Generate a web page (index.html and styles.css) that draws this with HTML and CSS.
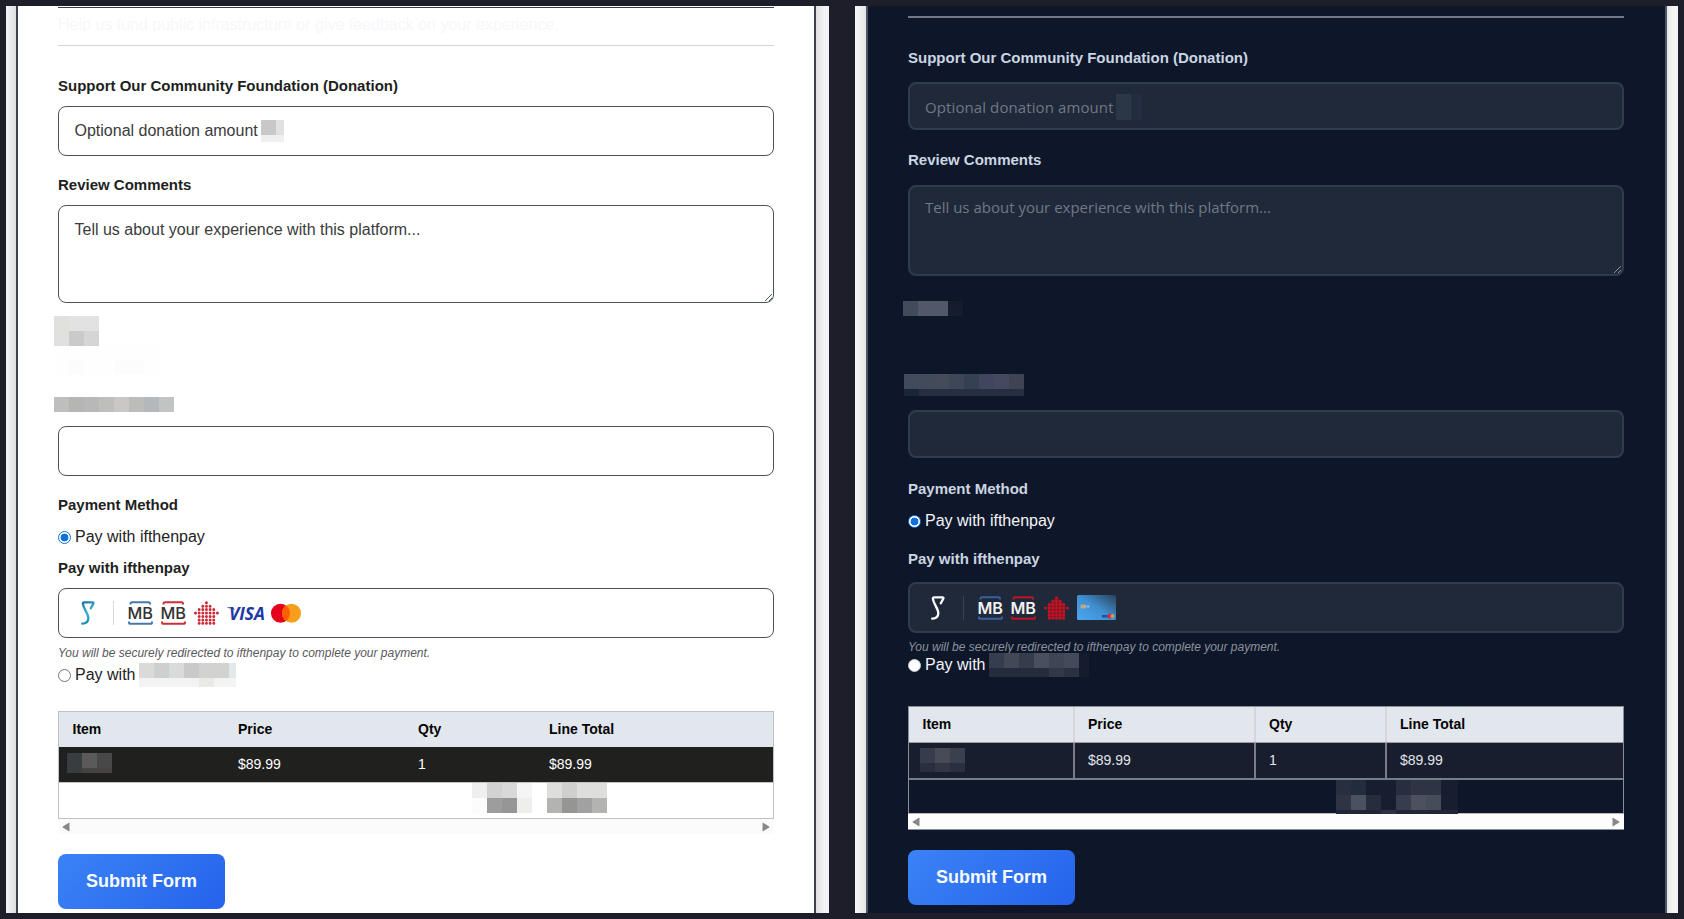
FILE: index.html
```html
<!DOCTYPE html>
<html lang="en">
<head>
<meta charset="utf-8">
<title>Donation form</title>
<link rel="stylesheet" href="styles.css">
</head>
<body>
<svg width="0" height="0" class="defs">
  <defs>
    <linearGradient id="pen" x1="0" y1="0" x2="14" y2="24" gradientUnits="userSpaceOnUse"><stop offset="0" stop-color="#176a96"/><stop offset=".5" stop-color="#35b4d6"/><stop offset="1" stop-color="#176a96"/></linearGradient>
    <linearGradient id="card" x1="0" y1="1" x2="1" y2="0"><stop offset="0" stop-color="#4aa8f2"/><stop offset=".5" stop-color="#3f8fd2"/><stop offset="1" stop-color="#2b4258"/></linearGradient>
    <symbol id="brand" viewBox="0 0 14 24"><path d="M1.200 22.600C4.800 22.400 7.300 20.300 7.300 17.200C7.300 12.500 2.600 8 1.900 2.800Q1.800 1.300 3.200 1.300H11.300Q12.800 1.300 12.300 2.700L9.800 7.200" fill="none" stroke-width="2.300" stroke-linecap="round" stroke-linejoin="round"/></symbol>
    <symbol id="brackets" viewBox="0 0 25 24"><path d="M2.500 3.400V2.800Q2.500 1.200 4 1.200H20.500Q22 1.200 22 2.800V3.400M1 20.600V21.200Q1 22.800 2.500 22.800H22.500Q24 22.800 24 21.200V20.600" fill="none" stroke-width="2"/></symbol>
    <symbol id="house" viewBox="0 0 25 24"><path d="M12.450 1.700h.01M8.800 5.150H16.200M5.150 8.600H19.900M1.500 12.050H23.500M5.150 15.500H19.900M5.150 18.950H19.900M5.150 22.300H19.900" fill="none" stroke-width="3" stroke-linecap="round" stroke-dasharray="0 3.650"/></symbol>
  </defs>
</svg>
<main class="compare">
  <section class="shot light">
    <form class="form">
      <p class="intro">Help us fund public infrastructure or give feedback on your experience.</p>
      <div class="label first">Support Our Community Foundation (Donation)</div>
      <div class="field"><span class="hint">Optional donation amount</span>
        <svg class="mosaic in-field" width="23" height="22"><path fill="#c8c8c8" d="M0 0h15v15H0z"/><path fill="#e1e1e1" d="M15 0h8v15h-8z"/><path fill="#efefef" d="M0 15h23v7H0z"/></svg>
      </div>
      <div class="label">Review Comments</div>
      <div class="field area"><span class="hint">Tell us about your experience with this platform...</span>
        <svg class="grip" width="9" height="9"><path d="M1 8L8 1M5 8L8 5" fill="none"/></svg>
      </div>
      <svg class="mosaic total-title" width="105" height="60"><path fill="#e0e0de" d="M0 0h15v30H0z"/><path fill="#e2e2e2" d="M15 0h30v15H15z"/><path fill="#cacaca" d="M15 15h15v15H15z"/><path fill="#d5d5d5" d="M30 15h15v15H30z"/><path fill="#fefefe" d="M0 30h105v30H0z"/><path fill="#fcfcfc" d="M15 45h15v13H15zM60 45h30v13H60z"/></svg>
      <svg class="mosaic name-title" width="120" height="15"><path fill="#bebfbd" d="M0 0h15v15H0z"/><path fill="#b5b6b3" d="M15 0h15v15H15z"/><path fill="#b7b9b8" d="M30 0h15v15H30z"/><path fill="#bebfbd" d="M45 0h15v15H45z"/><path fill="#c9c8c6" d="M60 0h15v15H60z"/><path fill="#bcbdbb" d="M75 0h15v15H75z"/><path fill="#b5b8bb" d="M90 0h15v15H90z"/><path fill="#c2c4c3" d="M105 0h15v15h-15z"/></svg>
      <div class="field name"></div>
      <div class="label">Payment Method</div>
      <label class="option"><span class="radio on"></span><span class="opt-text">Pay with ifthenpay</span></label>
      <div class="label gateway">Pay with ifthenpay</div>
      <div class="field logos">
        <svg class="brand" width="14" height="24"><use href="#brand" stroke="url(#pen)"/></svg>
        <span class="rule"></span>
        <svg class="mb" width="25" height="24"><use href="#brackets" stroke="#4779a8"/><text x="-.5" y="17.700" textLength="25.500" lengthAdjust="spacingAndGlyphs">MB</text></svg>
        <svg class="mb" width="25" height="24"><use href="#brackets" stroke="#cb2f3a"/><text x="-.5" y="17.700" textLength="25.500" lengthAdjust="spacingAndGlyphs">MB</text></svg>
        <svg class="house" width="25" height="24"><use href="#house"/></svg>
        <svg class="visa" width="38" height="24"><text x="2" y="18.700" textLength="36" lengthAdjust="spacingAndGlyphs">VISA</text><path d="M.5 6.200H6L8 9Q4 6.800 .5 6.900Z" fill="#2340a0"/></svg>
        <svg class="mc" width="30" height="24"><circle cx="9.500" cy="12.200" r="9.500" fill="#e5001b"/><circle cx="20.500" cy="12.200" r="9.500" fill="#f79e1b"/><path d="M15 4.450a9.500 9.500 0 0 1 0 15.500a9.500 9.500 0 0 1 0-15.500z" fill="#ff5f00"/></svg>
      </div>
      <div class="note">You will be securely redirected to ifthenpay to complete your payment.</div>
      <label class="option second"><span class="radio"></span><span class="opt-text">Pay with</span>
        <svg class="mosaic in-option" width="97" height="24"><path fill="#dadbd8" d="M0 0h15v15H0z"/><path fill="#cecfcf" d="M15 0h15v15H15z"/><path fill="#d9dbdb" d="M30 0h15v15H30z"/><path fill="#c9c9ca" d="M45 0h15v15H45z"/><path fill="#d2d3d1" d="M60 0h30v15H60z"/><path fill="#e4e8eb" d="M90 0h7v15h-7z"/><path fill="#f2f3f2" d="M0 15h97v9H0z"/><path fill="#e9e9e7" d="M60 15h15v9H60z"/></svg>
      </label>
      <div class="table">
        <div class="tr head"><b>Item</b><b>Price</b><b>Qty</b><b>Line Total</b></div>
        <div class="tr row"><span><svg class="mosaic in-cell" width="45" height="20"><path fill="#3a3d3f" d="M0 0h15v20H0z"/><path fill="#5a5a5a" d="M15 0h15v15H15z"/><path fill="#484848" d="M30 0h15v15H30z"/><path fill="#444342" d="M15 15h30v5H15z"/></svg></span><span>$89.99</span><span>1</span><span>$89.99</span></div>
        <div class="tr foot"><svg class="mosaic sum" width="135" height="30"><path fill="#efefef" d="M0 0h15v15H0z"/><path fill="#d2d2d2" d="M15 0h15v15H15z"/><path fill="#d9d9d9" d="M30 0h15v15H30z"/><path fill="#f5f5f5" d="M45 0h15v15H45z"/><path fill="#fcfcfc" d="M0 15h15v15H0z"/><path fill="#9d9d9d" d="M15 15h15v15H15z"/><path fill="#969696" d="M30 15h15v15H30z"/><path fill="#eeeeed" d="M45 15h15v15H45z"/><path fill="#dededd" d="M75 0h15v15H75zM105 0h30v15h-30z"/><path fill="#cfcfce" d="M90 0h15v15H90z"/><path fill="#b3b3b1" d="M75 15h15v15H75zM120 15h15v15h-15z"/><path fill="#959594" d="M90 15h15v15H90z"/><path fill="#a1a1a1" d="M105 15h15v15h-15z"/></svg></div>
      </div>
      <div class="scroll"><svg width="8" height="10"><path d="M7.500 1.200V8.800Q7.500 9.500 6.500 9L.8 5.600Q.2 5 .8 4.400L6.500 1Q7.500.5 7.500 1.200Z"/></svg><svg width="8" height="10"><path d="M.5 1.200V8.800Q.5 9.500 1.500 9L7.200 5.600Q7.800 5 7.200 4.400L1.500 1Q.5.5.5 1.200Z"/></svg></div>
      <button type="button" class="submit"><span>Submit Form</span></button>
    </form>
  </section>
  <section class="shot dark">
    <form class="form">
      <div class="divider"></div>
      <div class="label first">Support Our Community Foundation (Donation)</div>
      <div class="field"><span class="hint h1">Optional donation amount</span>
        <svg class="mosaic in-field" width="26" height="26"><path fill="#2b3647" d="M0 0h15v26H0z"/><path fill="#242d3f" d="M15 0h11v26H15z"/></svg>
      </div>
      <div class="label">Review Comments</div>
      <div class="field area"><span class="hint h2">Tell us about your experience with this platform...</span>
        <svg class="grip" width="9" height="9"><path d="M1 8L8 1M5 8L8 5" fill="none"/></svg>
      </div>
      <svg class="mosaic total-title" width="60" height="15"><path fill="#414b5c" d="M0 0h15v15H0z"/><path fill="#505869" d="M15 0h30v15H15z"/><path fill="#141c2e" d="M45 0h15v15H45z"/></svg>
      <svg class="mosaic name-title" width="120" height="22"><path fill="#424b5b" d="M0 0h30v15H0z"/><path fill="#444b5b" d="M30 0h15v15H30z"/><path fill="#3d4757" d="M45 0h15v15H45z"/><path fill="#344155" d="M60 0h15v15H60z"/><path fill="#40465d" d="M75 0h15v15H75z"/><path fill="#454960" d="M90 0h15v15H90z"/><path fill="#3f4354" d="M105 0h15v15h-15z"/><path fill="#1a2638" d="M0 15h15v7H0z"/><path fill="#252e42" d="M15 15h105v7H15z"/></svg>
      <div class="field name"></div>
      <div class="label">Payment Method</div>
      <label class="option"><span class="radio on"></span><span class="opt-text">Pay with ifthenpay</span></label>
      <div class="label gateway">Pay with ifthenpay</div>
      <div class="field logos">
        <svg class="brand" width="14" height="24"><use href="#brand" stroke="#fff"/></svg>
        <span class="rule"></span>
        <svg class="mb" width="25" height="24"><use href="#brackets" stroke="#36619f"/><text x="-.5" y="17.700" textLength="25.500" lengthAdjust="spacingAndGlyphs">MB</text></svg>
        <svg class="mb" width="25" height="24"><use href="#brackets" stroke="#c01525"/><text x="-.5" y="17.700" textLength="25.500" lengthAdjust="spacingAndGlyphs">MB</text></svg>
        <svg class="house" width="25" height="24"><path d="M12.500 1L21 9V23H4V9Z" fill="#861525"/><use href="#house"/></svg>
        <svg class="cc" width="39" height="25"><rect width="39" height="25" rx="1.500" fill="url(#card)"/><rect x="3.500" y="9.500" width="5.500" height="4" rx="1" fill="#b8aa88"/><path d="M9.500 10.500h3v2h-3z" fill="#8fc0e8"/><path d="M25 20h7v2.500h-7z" fill="#28509c"/><circle cx="33" cy="21" r="2.500" fill="#cc3048"/><circle cx="35.500" cy="21" r="2" fill="#d99a50"/></svg>
      </div>
      <div class="note">You will be securely redirected to ifthenpay to complete your payment.</div>
      <label class="option second"><span class="radio"></span><span class="opt-text">Pay with</span>
        <svg class="mosaic in-option" width="100" height="24"><path fill="#353e4f" d="M0 0h15v15H0z"/><path fill="#434856" d="M15 0h15v15H15z"/><path fill="#353c4b" d="M30 0h15v15H30z"/><path fill="#4a4f5d" d="M45 0h15v15H45z"/><path fill="#3f4554" d="M60 0h15v15H60z"/><path fill="#434a59" d="M75 0h15v15H75z"/><path fill="#141c2e" d="M90 0h10v24H90z"/><path fill="#242c3d" d="M0 15h60v9H0z"/><path fill="#323848" d="M60 15h15v9H60z"/><path fill="#293143" d="M75 15h15v9H75z"/></svg>
      </label>
      <div class="table">
        <div class="tr head"><b>Item</b><b>Price</b><b>Qty</b><b>Line Total</b></div>
        <div class="tr row"><span><svg class="mosaic in-cell" width="45" height="24"><path fill="#363c4b" d="M0 0h15v15H0z"/><path fill="#474b58" d="M15 0h15v15H15z"/><path fill="#3b404e" d="M30 0h15v15H30z"/><path fill="#292f3f" d="M0 15h15v9H0z"/><path fill="#323746" d="M15 15h15v9H15z"/><path fill="#2b3040" d="M30 15h15v9H30z"/></svg></span><span>$89.99</span><span>1</span><span>$89.99</span></div>
        <div class="tr foot"><svg class="mosaic sum" width="122" height="34"><path fill="#171e30" d="M0 0h122v35H0z"/><path fill="#262e3f" d="M0 0h15v15H0zM60 0h15v15H60z"/><path fill="#232c3c" d="M15 0h15v15H15z"/><path fill="#2d3545" d="M0 15h15v15H0zM75 0h30v15H75z"/><path fill="#4a5261" d="M15 15h15v15H15z"/><path fill="#262e3e" d="M30 15h15v15H30z"/><path fill="#353d4e" d="M60 15h15v15H60z"/><path fill="#4d515e" d="M75 15h15v15H75z"/><path fill="#454c5a" d="M90 15h15v15H90z"/><path fill="#1f2638" d="M0 30h45v5H0zM60 30h62v5H60z"/><path fill="#2b3245" d="M45 30h15v5H45z"/></svg></div>
      </div>
      <div class="scroll"><svg width="8" height="10"><path d="M7.500 1.200V8.800Q7.500 9.500 6.500 9L.8 5.600Q.2 5 .8 4.400L6.500 1Q7.500.5 7.500 1.200Z"/></svg><svg width="8" height="10"><path d="M.5 1.200V8.800Q.5 9.500 1.500 9L7.200 5.600Q7.800 5 7.200 4.400L1.500 1Q.5.5.5 1.200Z"/></svg></div>
      <button type="button" class="submit"><span>Submit Form</span></button>
    </form>
  </section>
</main>
</body>
</html>
```
FILE: styles.css
```css
* { box-sizing: border-box; }
body { margin: 0; background: #1d1e2a; font-family: "Liberation Sans", Arial, sans-serif; overflow: hidden; }
svg { display: block; flex: none; }
.defs { position: absolute; }
.compare { display: flex; gap: 26px; height: 919px; padding: 6px; }
.shot { width: 823px; height: 907px; overflow: hidden; display: flex; }
.light { background: linear-gradient(90deg, #f5f5f7 0, #dcdddf 10px, #dcdddf 809px, #f3f3f5 818px); padding: 0 13px 0 10px; }
.dark { background: linear-gradient(90deg, #f8f8f9 0, #e4e4e5 11px, #e8e8e9 812px, #f4f4f5 818px); padding: 0 11px; }
.form { flex: 1; height: 907px; padding: 0 40px; border: solid #3b414d; border-width: 0 2px; }
.light .form { background: #fff; padding-top: 1px; }
.dark .form { background: #0e172a; padding: 10px 41px 0 40px; border-color: #4a5566; }

.intro { margin: 0; height: 39px; border-top: 1px solid #353b49; border-bottom: 1px solid #d3d4d7; font-size: 16px; line-height: 34px; color: #f6f8fb; white-space: nowrap; }
.divider { height: 2px; background: #747988; }
.label { height: 20px; margin-top: 19px; font-size: 15px; font-weight: bold; line-height: 20px; color: #1e1f1e; white-space: nowrap; }
.label.first { margin-top: 30px; }
.light .gateway { margin-top: 11px; }
.field { position: relative; height: 50px; margin-top: 10px; padding: 0 15.500px; border: 1px solid #4b525e; border-radius: 8px; display: flex; align-items: center; }
.hint { font-size: 16px; line-height: 20px; color: #3a3b3c; white-space: nowrap; }
.area { height: 98px; align-items: flex-start; padding-top: 14px; }
.in-field { margin-left: 3px; }
.grip { position: absolute; right: 0; bottom: 0; stroke: #55585e; }
.total-title { margin: 13px 0 0 -4px; }
.name-title { margin: 21px 0 0 -4px; }
.name { margin-top: 14px; }
.option { display: flex; align-items: center; height: 20px; margin-top: 12px; font-size: 16px; color: #222; }
.radio { width: 13px; height: 13px; border: 1px solid #767676; border-radius: 50%; background: #fff; flex: none; }
.radio.on { border-color: #1273d3; background: radial-gradient(circle, #1070dc 0 3.700px, #fff 4.200px); }
.opt-text { margin-left: 4px; white-space: nowrap; }
.second { margin-top: 3px; }
.in-option { margin-left: 4px; }
.logos { padding: 0 0 0 22px; }
.rule { width: 1px; height: 24px; background: #d8dadd; margin: 0 14px 0 18px; }
.mb { margin-right: 8px; overflow: visible; }
.mb text { font: 500 16px Inter, sans-serif; fill: #333; }
.house { fill: #cb2a37; stroke: #cb2a37; margin-right: 8px; }
.visa { margin-right: 6px; overflow: visible; }
.visa text { font: italic 700 17px "Open Sans", sans-serif; fill: #2139a5; }
.note { height: 18px; margin-top: 6px; font-size: 12px; font-style: italic; line-height: 18px; color: #58595b; white-space: nowrap; }

.table { margin-top: 26px; height: 108px; border: 1px solid #bfc1c4; }
.tr { display: grid; grid-template-columns: 165.500px 180px 131px 1fr; align-items: center; font-size: 14px; }
.tr > b, .tr > span { padding-left: 13.500px; line-height: 20px; }
.head { height: 35px; background: #e2e7ed; color: #050505; }
.row { height: 35px; background: #20201f; color: #fff; }
.light .tr > b, .light .tr > span { margin-top: -1px; }
.foot { height: 36px; border-top: 1px solid #c4c4c4; }
.in-cell { margin: -2px 0 0 -5.500px; }
.light .sum { margin: -5px 0 0 413px; }
.scroll { height: 15px; padding: 0 4px; display: flex; justify-content: space-between; align-items: center; background: #fbfbfb; fill: #888; }
.submit { display: block; width: 167px; height: 55px; margin-top: 20px; padding: 0; border: 0; border-radius: 8px; background: linear-gradient(135deg, #3b82f6, #2563eb); color: #f6fbff; font: bold 18px "Liberation Sans", Arial, sans-serif; }

.dark .label { color: #cbd5e1; margin-top: 20px; }
.dark .label.first { margin-top: 30px; }
.dark .field { height: 48px; margin-top: 14px; border: 2px solid #303c4d; background: #1f293a; padding: 0 15px; }
.dark .hint { font-family: "Open Sans", "Noto Sans", sans-serif; font-size: 15px; color: #707884; }
.dark .h1 { letter-spacing: .1px; padding-top: 2px; }
.dark .area { height: 91px; margin-top: 15px; padding-top: 10px; }
.dark .in-field { margin: 1px 0 0 2px; }
.dark .grip { stroke: #8b929c; }
.dark .total-title { margin: 25px 0 0 -5px; }
.dark .name-title { margin: 58px 0 0 -4px; }
.dark .name + .label { margin-top: 21px; }
.dark .option { color: #f4f5f7; }
.dark .radio { border-color: #c8ccd2; }
.dark .radio.on { border-color: #1273e8; }
.dark .gateway { margin-top: 18px; }
.dark .logos { height: 51px; margin-top: 13px; padding: 0 0 0 21px; }
.dark .rule { background: #374252; }
.dark .mb text { fill: #f1f1f3; font-weight: 600; }
.dark .house { fill: #c01525; stroke: #c01525; }
.dark .house path { stroke: none; }
.dark .note { margin-top: 5px; color: #8c929c; }
.dark .second { margin-top: -1px; }
.dark .table { margin-top: 31px; border-color: #8b8e97; border-width: 1px 1px; border-bottom-color: #bbb; }
.dark .tr { grid-template-columns: 165.500px 181px 131px 1fr; }
.dark .tr > b, .dark .tr > span { height: 100%; line-height: 34px; border-right: 2px solid #797d87; }
.dark .tr > :last-child { border-right: 0; }
.dark .head > b { border-color: #d3d6da !important; }
.dark .row { height: 36px; background: #181e2e; color: #e2e4ea; border-top: 1px solid #9a9da6; }
.dark .foot { height: 35px; border-top: 2px solid #797d87; overflow: visible; align-items: start; }
.dark .in-cell { margin: 5px 0 0 -3px; }
.dark .sum { margin-left: 427px; }
.dark .scroll { height: 16px; border-bottom: 1px solid #8b8e97; background: #fdfdfd; }
.dark .submit { height: 55px; }
```
